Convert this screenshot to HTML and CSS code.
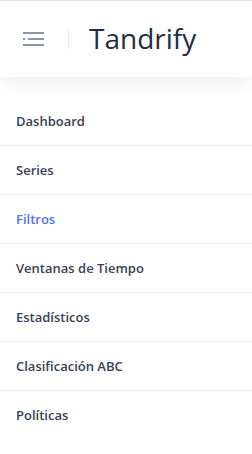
FILE: index.html
```html
<!DOCTYPE html>
<html lang="es">
<head>
<meta charset="utf-8">
<link rel="stylesheet" href="styles.css">
</head>
<body>
<header class="topbar">
  <button class="menu-btn" aria-label="Menú">
    <svg width="22" height="14" viewBox="0 0 22 14">
      <rect x="0" y="0" width="21" height="2" fill="#8c94b1"/>
      <rect x="0" y="6" width="2" height="2" fill="#8c94b1"/>
      <rect x="5" y="6" width="16" height="2" fill="#8c94b1"/>
      <rect x="0" y="12" width="21" height="2" fill="#8c94b1"/>
    </svg>
  </button>
  <span class="divider"></span>
  <h1 class="brand">Tandrify</h1>
</header>
<nav class="nav">
  <a class="nav-item" href="#">Dashboard</a>
  <a class="nav-item" href="#">Series</a>
  <a class="nav-item active" href="#">Filtros</a>
  <a class="nav-item" href="#">Ventanas de Tiempo</a>
  <a class="nav-item" href="#">Estadísticos</a>
  <a class="nav-item" href="#">Clasificación ABC</a>
  <a class="nav-item" href="#">Políticas</a>
</nav>
</body>
</html>
```
FILE: styles.css
```css
* { box-sizing: border-box; }
html, body { margin: 0; padding: 0; }
body {
  font-family: "Open Sans", "Noto Sans", sans-serif;
  background: #fff;
  border-top: 1px solid #dcdde1;
  width: 252px;
  min-height: 454px;
}
.topbar {
  height: 76px;
  display: flex;
  align-items: center;
  padding-left: 23px;
  background: #fff;
  box-shadow: 0 6px 16px rgba(40, 45, 70, 0.08);
  position: relative;
}
.menu-btn {
  border: 0;
  background: none;
  padding: 0;
  width: 22px;
  height: 14px;
  display: block;
}
.menu-btn svg { display: block; }
.divider {
  width: 1px;
  height: 19px;
  background: #e6e9f2;
  margin-left: 23px;
  margin-right: 20px;
}
.brand {
  margin: 0;
  font-size: 28px;
  font-weight: 400;
  color: #252b48;
  line-height: 1;
  margin-top: -2px;
}
.nav {
  display: flex;
  flex-direction: column;
  padding-top: 20px;
}
.nav-item {
  display: block;
  height: 49px;
  line-height: 48px;
  padding-left: 16px;
  font-size: 13px;
  font-weight: 550;
  color: #3a405c;
  text-decoration: none;
  border-bottom: 1px solid #ebedf4;
}
.nav-item:last-child { border-bottom: 0; }
.nav-item.active { color: #4d76ef; }
```
